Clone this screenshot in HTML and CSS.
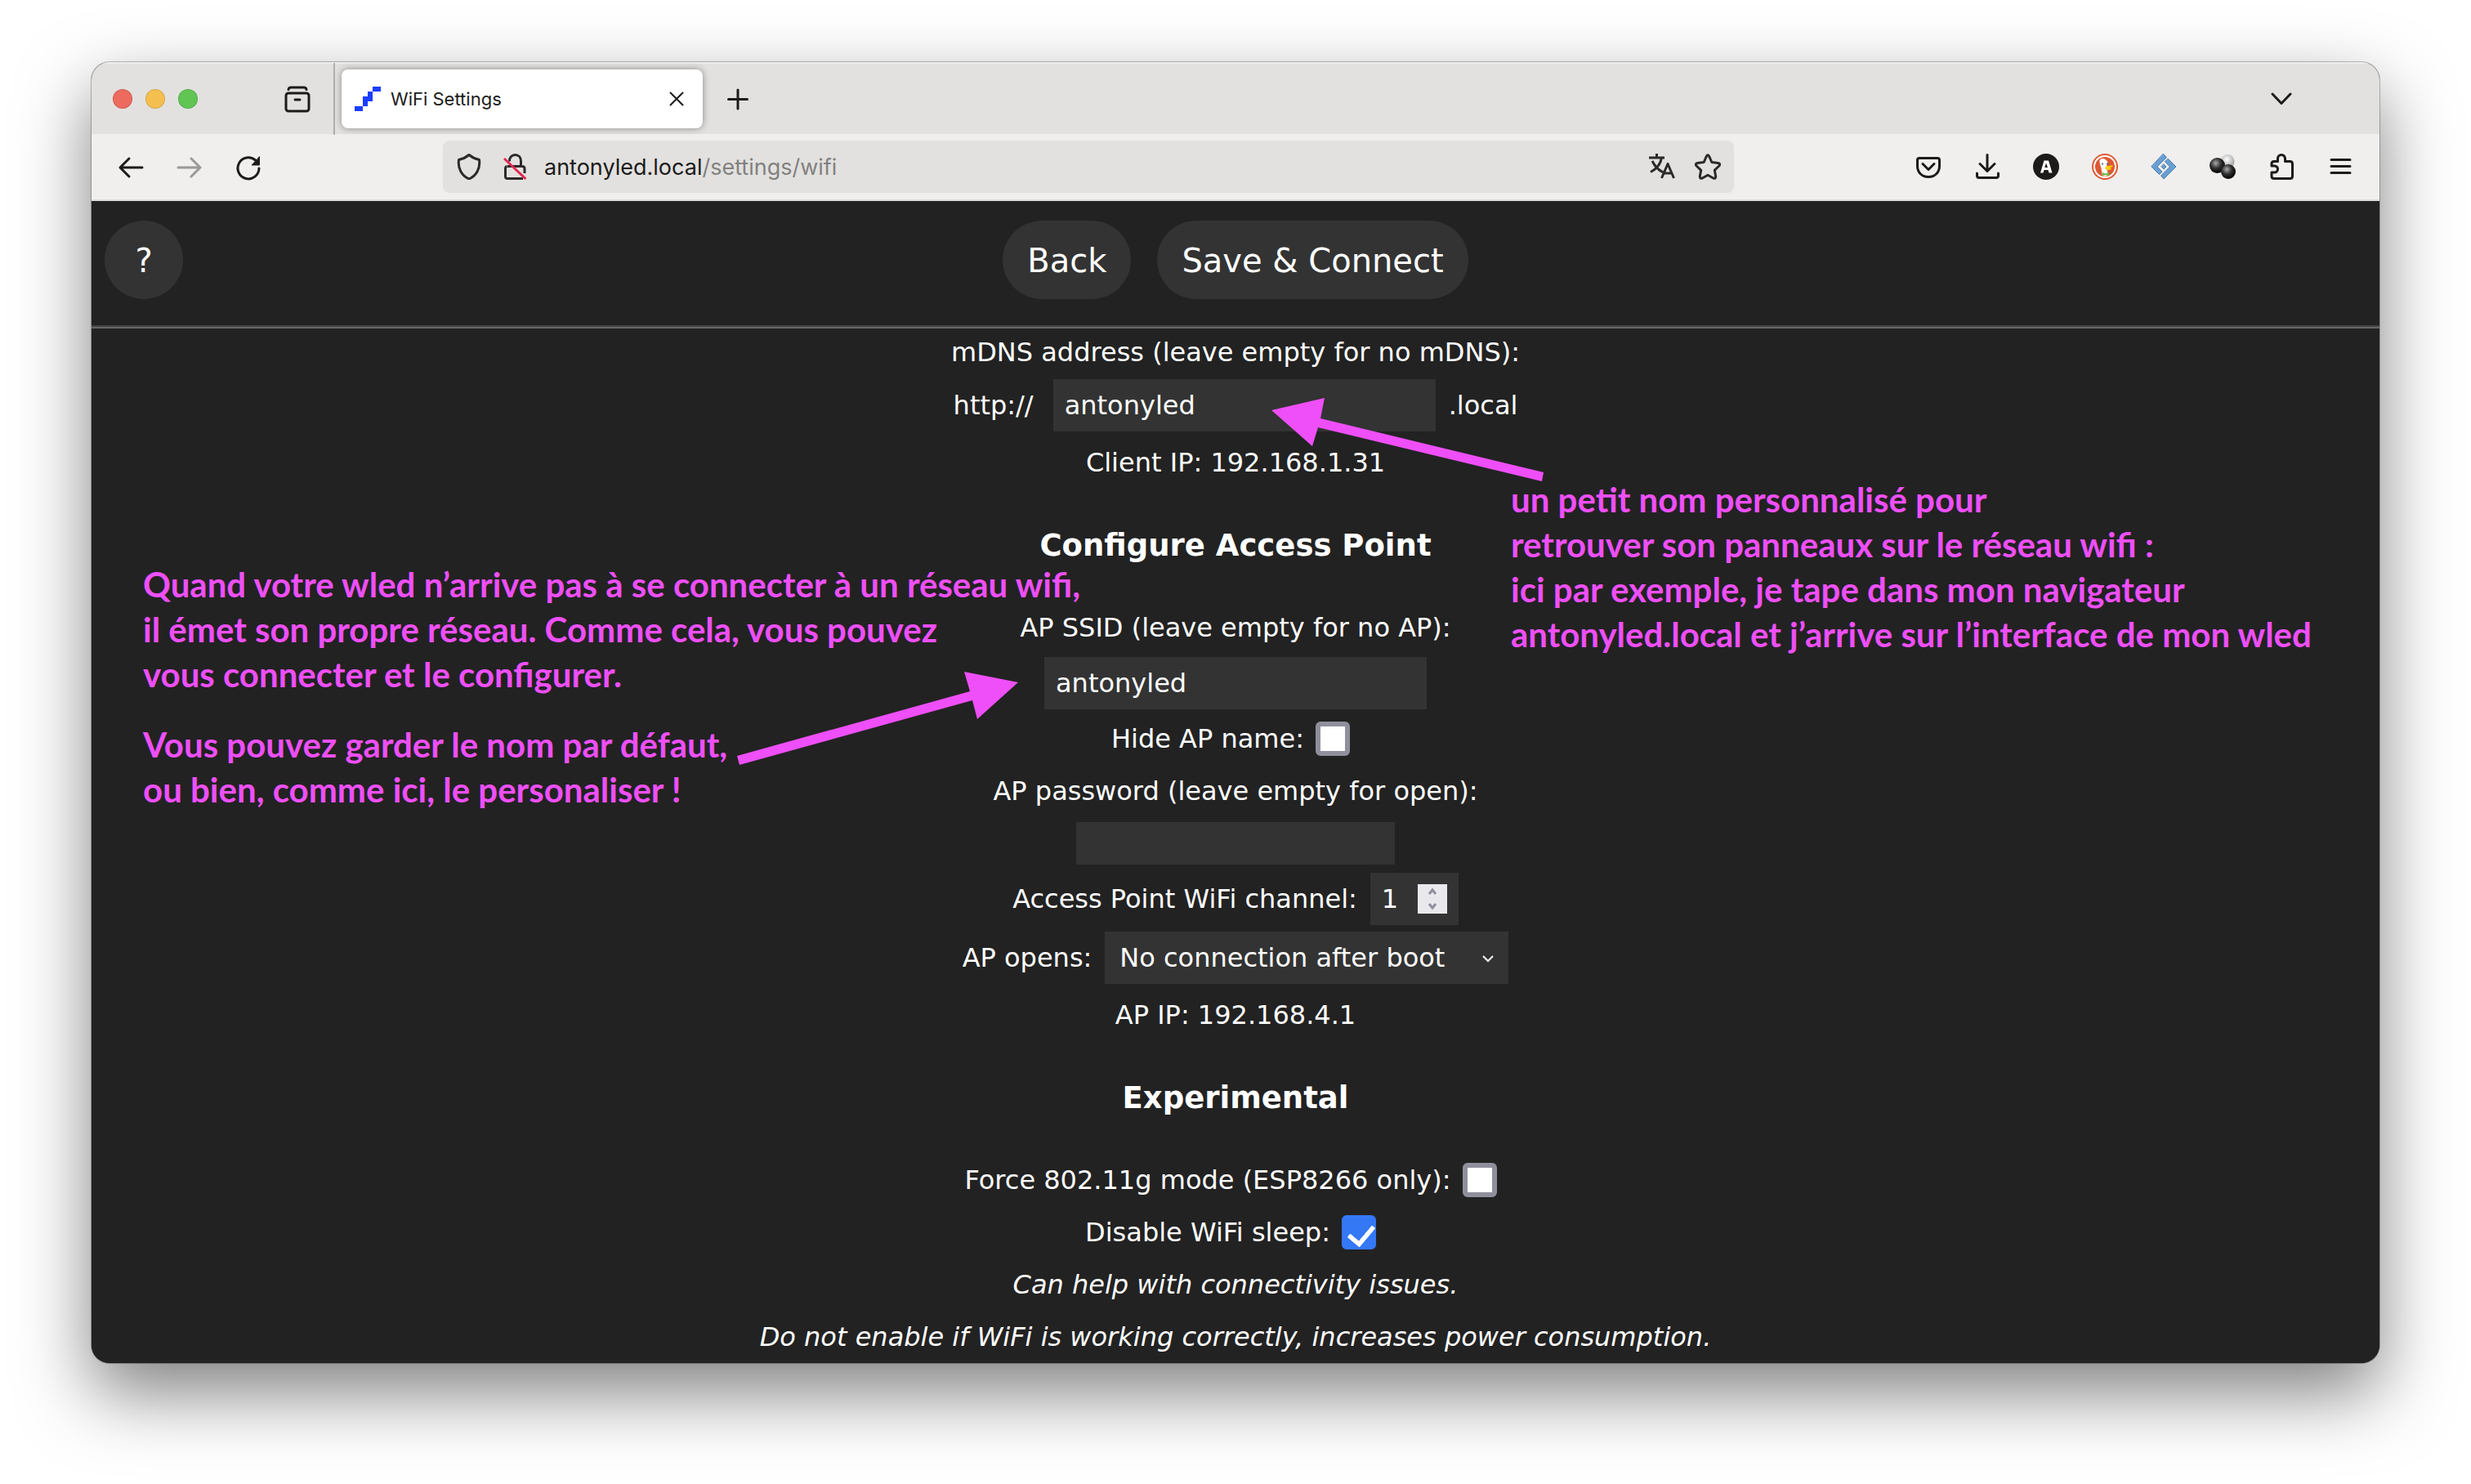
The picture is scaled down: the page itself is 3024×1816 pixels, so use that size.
FILE: index.html
```html
<!DOCTYPE html>
<html lang="en">
<head>
  <meta charset="UTF-8" />
  <meta name="viewport" content="width=device-width, initial-scale=1.0" />
  <title>WiFi Settings</title>
  <link rel="stylesheet" href="styles.css">
</head>
<body>
  <div class="window">
    <div class="tabbar">
      <div class="lights">
        <span class="light red"></span>
        <span class="light yellow"></span>
        <span class="light green"></span>
      </div>
      <button class="icon view" aria-label="Firefox View">
        <svg viewBox="0 0 32 32"><path d="M5 4.500Q5.500 2 8 2H24Q26.500 2 27 4.500"/><rect x="2" y="9" width="28" height="22" rx="3"/><path d="M13 17h6" stroke-width="3"/></svg>
      </button>
      <div class="tab">
        <svg class="favicon" viewBox="0 0 32 32"><path d="M0 25H10V13H16V7H22V1H32V7H26V7H22V19H16V25H10V31H0Z"/></svg>
        <span class="tab-title">WiFi Settings</span>
        <button class="icon small" aria-label="Close tab">
          <svg viewBox="0 0 20 20"><path d="M2.500 2.500l15 15M17.500 2.500l-15 15"/></svg>
        </button>
      </div>
      <button class="icon newtab" aria-label="New tab">
        <svg viewBox="0 0 32 32"><path d="M16 5v23M4.500 16.500h23"/></svg>
      </button>
      <button class="icon alltabs" aria-label="List all tabs">
        <svg viewBox="0 0 32 32"><path d="M5 10l11 11.500L27 10"/></svg>
      </button>
    </div>

    <div class="toolbar">
      <div class="tools">
        <button class="icon" aria-label="Back one page">
          <svg viewBox="0 0 32 32"><path d="M30 17H3M14 6L3 17l11 11"/></svg>
        </button>
        <button class="icon dim" aria-label="Forward one page">
          <svg viewBox="0 0 32 32"><path d="M2 17h27M18 6l11 11-11 11"/></svg>
        </button>
        <button class="icon" aria-label="Reload">
          <svg viewBox="0 0 32 32"><path d="M29 18A13 13 0 1 1 24.500 8"/><path d="M29.500 4v10h-9z" class="fill"/></svg>
        </button>
      </div>

      <div class="urlbar">
        <svg class="glyph" viewBox="0 0 32 32"><path d="M16 1.500C19 4 24 6.500 28.500 7.500C30 18 25 27 16 31C7 27 2 18 3.500 7.500C8 6.500 13 4 16 1.500Z"/></svg>
        <svg class="glyph lock" viewBox="0 0 32 32"><path d="M9.500 9.500C9.500 4.500 12.500 1.500 16.500 1.500S23.500 4.500 23.500 9V15M7 15.500H25Q28 15.500 28 18.500V24M6.500 15.500Q4.500 16 4.500 18.500V28Q4.500 30.500 7 30.500H26"/><path class="slash" d="M3 6L29.500 31"/></svg>
        <span class="url">antonyled.local<span>/settings/wifi</span></span>
        <svg class="glyph" viewBox="0 0 32 32"><path stroke-width="3" d="M0 5H19M9.500 0V5M15.500 5C14 13 9 19 2 22.500M4 9C7 15 11 20 17 22.500M15.500 30L23 12.500L30.500 30M18 24H28"/></svg>
        <svg class="glyph" viewBox="0 0 32 32"><path d="M14.400 3.200Q16 .5 17.600 3.200L20.800 10.500L28.500 11.500Q32 12.300 29.800 15L24.300 20.300L25.700 27.800Q25.800 31 22.700 30L16 26.300L9.300 30Q6.200 31 6.300 27.800L7.700 20.300L2.200 15Q0 12.300 3.500 11.500L11.200 10.500Z"/></svg>
      </div>

      <div class="tools">
        <button class="icon" aria-label="Pocket">
          <svg viewBox="0 0 32 32"><path d="M5 5.500H27Q29.500 5.500 29.500 8V15C29.500 23 24 28.500 16 28.500S2.500 23 2.500 15V8Q2.500 5.500 5 5.500Z"/><path d="M9 12.500l7 7 7-7"/></svg>
        </button>
        <button class="icon" aria-label="Downloads">
          <svg viewBox="0 0 32 32"><path d="M16 1.500V21M7 12.500l9 9 9-9M3.500 24V27Q3.500 29.500 6 29.500H27Q29.500 29.500 29.500 27V24"/></svg>
        </button>
        <button class="icon" aria-label="Accounts">
          <svg viewBox="0 0 32 32" class="plain"><circle cx="16" cy="16" r="16" fill="#1c1b19"/><path fill="#fff" fill-rule="evenodd" d="M13.500 8.500h5.500l4.500 15h-4l-1-3.500h-5l-1 3.500H9zM16 11.500l-1.700 5.500h3.700z"/></svg>
        </button>
        <button class="icon" aria-label="DuckDuckGo">
          <svg viewBox="0 0 32 32" class="plain"><circle cx="16" cy="16" r="16" fill="#de5833"/><circle cx="16" cy="16" r="14" fill="#fff"/><circle cx="16" cy="16" r="12" fill="#de5833"/><path fill="#fff" d="M9.500 8L12 6Q18 6 19.500 11L18 16L20 26.500Q16 28.500 13 27L11.500 18Q9 11 9.500 8Z"/><circle cx="13" cy="12.500" r="1" fill="#2d4f8e"/><circle cx="19" cy="12.500" r="1" fill="#2d4f8e"/><path fill="#fdd20a" d="M16.500 16Q21 14 26 14.500Q25 17 21 17.500Q25 18 24 19Q20 21 16.500 19Z"/><path fill="#67bd47" d="M13 23l4 1.500 4-2v5l-4-1.500-4 1z"/></svg>
        </button>
        <button class="icon" aria-label="Diamond extension">
          <svg viewBox="0 0 32 32" class="plain"><g fill="#6a9fd4" stroke="#4a7dad" stroke-width="1"><path d="M15.500 .5L19.500 4.500L8 16L14 22L10.500 25.500L1 16Z"/><path d="M21.500 6.500L31 16L16 31L12.500 27L23.500 16L17.500 10Z"/><path d="M16 13l3 3-3 3-3-3z"/></g></svg>
        </button>
        <button class="icon" aria-label="Spheres extension">
          <svg viewBox="0 0 32 32" class="plain">
            <defs>
              <radialGradient id="dark" cx=".4" cy=".35" r=".65"><stop offset="0" stop-color="#aaa"/><stop offset=".5" stop-color="#333"/><stop offset="1" stop-color="#000"/></radialGradient>
              <radialGradient id="pale" cx=".45" cy=".35" r=".65"><stop offset="0" stop-color="#fff"/><stop offset="1" stop-color="#999"/></radialGradient>
            </defs>
            <circle cx="22" cy="9.500" r="8.500" fill="url(#pale)"/><circle cx="9.500" cy="14.500" r="9.500" fill="url(#dark)"/><circle cx="23" cy="22" r="9" fill="url(#dark)"/>
          </svg>
        </button>
        <button class="icon" aria-label="Extensions">
          <svg viewBox="0 0 32 32"><path d="M11.500 9.500V6A4.500 4.500 0 0 1 20.500 6V9.500H26.500Q29.500 9.500 29.500 12.500V27.500Q29.500 30.500 26.500 30.500H7Q4 30.500 4 27.500V23H7.500A4 4 0 0 0 7.500 15H4V12.500Q4 9.500 7 9.500Z"/></svg>
        </button>
        <button class="icon" aria-label="Menu">
          <svg viewBox="0 0 32 32"><path d="M5 7.500h23M5 15.500h23M5 23.500h23"/></svg>
        </button>
      </div>
    </div>

    <div class="page">
      <form class="settings">
        <div class="topbar">
          <button type="button" class="pill help">?</button>
          <button type="button" class="pill">Back</button>
          <button type="submit" class="pill">Save &amp; Connect</button>
        </div>

        <div class="row first"><label for="mdns">mDNS address (leave empty for no mDNS):</label></div>
        <div class="row field"><span class="prefix">http://</span><input type="text" id="mdns" value="antonyled"><span>.local</span></div>
        <div class="row value">Client IP: 192.168.1.31</div>

        <h3>Configure Access Point</h3>
        <div class="row"><label for="ssid">AP SSID (leave empty for no AP):</label></div>
        <div class="row field"><input type="text" id="ssid" value="antonyled"></div>
        <div class="row check"><label for="hide">Hide AP name:</label><input type="checkbox" id="hide"></div>
        <div class="row"><label for="pass">AP password (leave empty for open):</label></div>
        <div class="row"><input type="password" id="pass"></div>
        <div class="row field">
          <label for="channel">Access Point WiFi channel:</label>
          <span class="control">
            <input type="number" id="channel" value="1" min="1" max="13">
            <svg class="spinner" viewBox="0 0 36 36"><path d="M14 12l4-5 4 5M14 24l4 5 4-5"/></svg>
          </span>
        </div>
        <div class="row field">
          <label for="opens">AP opens:</label>
          <span class="control">
            <select id="opens">
              <option>No connection after boot</option>
              <option>Disconnected</option>
              <option>Always</option>
              <option>Never</option>
            </select>
            <svg class="arrow" viewBox="0 0 16 10"><path d="M2 2l6 6 6-6"/></svg>
          </span>
        </div>
        <div class="row value">AP IP: 192.168.4.1</div>

        <h3>Experimental</h3>
        <div class="row check"><label for="force">Force 802.11g mode (ESP8266 only):</label><input type="checkbox" id="force"></div>
        <div class="row check"><label for="sleep">Disable WiFi sleep:</label><input type="checkbox" id="sleep" checked></div>
        <div class="row"><i>Can help with connectivity issues.</i></div>
        <div class="row"><i>Do not enable if WiFi is working correctly, increases power consumption.</i></div>
      </form>

      <!-- annotations -->
      <div class="note note-ap">
        <p>Quand votre wled n’arrive pas à se connecter à un réseau wifi,<br>il émet son propre réseau. Comme cela, vous pouvez<br>vous connecter et le configurer.</p>
        <p>Vous pouvez garder le nom par défaut,<br>ou bien, comme ici, le personaliser !</p>
      </div>
      <div class="note note-mdns">
        <p>un petit nom personnalisé pour<br>retrouver son panneaux sur le réseau wifi :<br>ici par exemple, je tape dans mon navigateur<br>antonyled.local et j’arrive sur l’interface de mon wled</p>
      </div>
      <svg class="pointer pointer-mdns" viewBox="0 0 334 104"><path d="M0 16L65 1L60 26L333 92L331 103L57 37L50 60Z"/></svg>
      <svg class="pointer pointer-ap" viewBox="0 0 346 116"><path d="M345 15L279 2L286 26L1 105L4 116L289 37L295 60Z"/></svg>
    </div>
  </div>
</body>
</html>
```
FILE: styles.css
```css
* {
  box-sizing: border-box;
}
body {
  margin: 0;
  padding: 76px 112px 148px;
  background: #fff;
}
button {
  border: none;
  background: none;
  padding: 0;
  cursor: pointer;
}
.window {
  border-radius: 22px;
  overflow: hidden;
  background: #222;
  box-shadow: 0 0 0 1px rgba(0, 0, 0, 0.25), 0 36px 88px rgba(0, 0, 0, 0.5);
}

/* browser chrome */
.tabbar {
  display: flex;
  align-items: center;
  height: 88px;
  padding: 0 104px 0 26px;
  background: #e2e1df;
  border-top: 2px solid #eeedeb;
  font-family: Inter, sans-serif;
}
.lights {
  display: flex;
  gap: 16px;
}
.light {
  width: 24px;
  height: 24px;
  border-radius: 50%;
  border: 1px solid rgba(0, 0, 0, 0.12);
}
.red {
  background: #ed6a5e;
}
.yellow {
  background: #f5bf4f;
}
.green {
  background: #61c554;
}
.icon {
  flex: none;
  width: 32px;
  height: 32px;
}
.icon svg {
  display: block;
  width: 100%;
  height: 100%;
  fill: none;
  stroke: #1c1b1a;
  stroke-width: 3;
  stroke-linecap: round;
  stroke-linejoin: round;
  overflow: visible;
}
.icon svg.plain {
  stroke: none;
}
.icon .fill {
  fill: #1c1b1a;
  stroke-width: 1;
}
.dim {
  opacity: 0.4;
}
.view {
  margin-left: 106px;
}
.tab {
  position: relative;
  display: flex;
  align-items: center;
  width: 442px;
  height: 72px;
  margin-left: 38px;
  padding: 0 22px 0 16px;
  border-radius: 8px;
  background: #fff;
  box-shadow: 0 0 8px rgba(0, 0, 0, 0.4);
}
.tab::before {
  content: "";
  position: absolute;
  left: -10px;
  top: -8px;
  width: 2px;
  height: 88px;
  background: #afaeac;
}
.favicon {
  width: 32px;
  height: 32px;
  fill: #1a3dff;
}
.tab-title {
  flex: 1;
  margin-left: 12px;
  font-size: 22px;
  color: #1c1b1a;
}
.small {
  width: 20px;
  height: 20px;
}
.small svg {
  stroke-width: 2;
}
.newtab {
  margin-left: 27px;
}
.alltabs {
  margin-left: auto;
}
.toolbar {
  display: flex;
  align-items: center;
  height: 82px;
  padding: 0 32px;
  background: #f0efed;
  border-bottom: 2px solid #dddddb;
}
.tools {
  display: flex;
  gap: 40px;
}
.urlbar {
  flex: 1;
  display: flex;
  align-items: center;
  gap: 24px;
  height: 64px;
  margin: 0 222px;
  padding: 0 16px;
  border-radius: 8px;
  background: #e2e1df;
  font-family: Inter, sans-serif;
}
.glyph {
  width: 32px;
  height: 32px;
  fill: none;
  stroke: #2b2a28;
  stroke-width: 3;
  stroke-linejoin: round;
}
.lock {
  margin-right: -4px;
}
.slash {
  stroke: #e22850;
}
.url {
  flex: 1;
  font-size: 27px;
  color: #1c1b1a;
}
.url span {
  color: #82817f;
}

/* settings page */
.page {
  position: relative;
  overflow: hidden;
  background: #222;
  color: #fff;
  font-family: Verdana, "DejaVu Sans", sans-serif;
  font-size: 32px;
}
.topbar {
  position: relative;
  display: flex;
  justify-content: center;
  gap: 32px;
  padding: 24px 16px 32px;
  border-bottom: 2px solid #666;
  box-shadow: inset 0 -2px 0 #444;
  height: 156px;
}
.pill {
  height: 96px;
  padding: 2px 30px 0;
  border-radius: 48px;
  background: #333;
  color: #fff;
  font-family: inherit;
  font-size: 40px;
}
.help {
  position: absolute;
  left: 16px;
  top: 24px;
  width: 96px;
}
.row {
  display: flex;
  justify-content: center;
  align-items: center;
  gap: 16px;
  height: 64px;
}
.first {
  height: 58px;
}
.field {
  height: 72px;
}
.value {
  height: 68px;
}
.check {
  gap: 14px;
  padding-right: 12px;
}
.prefix {
  margin-right: 8px;
}
h3 {
  margin: 36px 0;
  font-size: 37px;
  line-height: 64px;
  text-align: center;
}
input,
select {
  border: none;
  border-radius: 0;
  background: #333;
  color: #fff;
  font-family: inherit;
  font-size: 32px;
}
input[type="text"] {
  width: 468px;
  height: 64px;
  padding: 0 14px;
}
input[type="password"] {
  width: 390px;
  height: 52px;
  padding: 0 14px;
}
input[type="number"] {
  width: 108px;
  height: 64px;
  padding: 0 14px;
  appearance: textfield;
}
select {
  width: 494px;
  height: 64px;
  padding: 0 18px;
  appearance: none;
}
input[type="checkbox"] {
  position: relative;
  appearance: none;
  width: 42px;
  height: 42px;
  margin: 0;
  border: 6px solid #8f8f9d;
  border-radius: 6px;
  background: #fff;
}
input[type="checkbox"]:checked {
  border-color: #3478f6;
  background: #3478f6;
}
input[type="checkbox"]:checked::before {
  content: "";
  position: absolute;
  left: 8px;
  top: 0;
  width: 14px;
  height: 25px;
  border: solid #fff;
  border-width: 0 6px 6px 0;
  border-radius: 2px;
  transform: rotate(40deg);
}
.control {
  position: relative;
  display: flex;
}
.spinner {
  position: absolute;
  right: 14px;
  top: 14px;
  width: 36px;
  height: 36px;
  background: #e9e9ed;
  fill: none;
  stroke: #8f8f9d;
  stroke-width: 3;
  pointer-events: none;
}
.arrow {
  position: absolute;
  right: 17px;
  top: 28px;
  width: 16px;
  height: 10px;
  fill: none;
  stroke: #fff;
  stroke-width: 2;
  pointer-events: none;
}

/* annotations */
.note {
  position: absolute;
  color: #ee4ff8;
  font-family: Lato, sans-serif;
  font-size: 42px;
  font-weight: bold;
  line-height: 55px;
  white-space: nowrap;
}
.note p {
  margin: 0 0 31px;
}
.note-ap {
  right: calc(50% + 181px);
  width: 1156px;
  top: 442px;
}
.note-mdns {
  left: calc(50% + 337px);
  top: 338px;
}
.pointer {
  position: absolute;
  fill: #ee4ff8;
}
.pointer-mdns {
  left: calc(50% + 44px);
  top: 240px;
  width: 334px;
}
.pointer-ap {
  right: calc(50% + 265px);
  top: 574px;
  width: 346px;
}
```
